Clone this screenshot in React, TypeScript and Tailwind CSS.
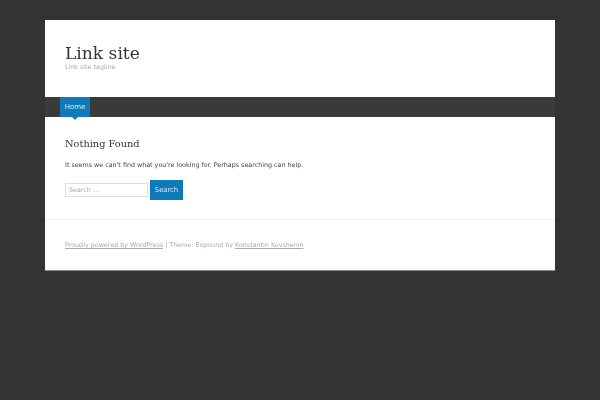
export default function App() {
  return (
    <div className="min-h-screen bg-[#333333] pt-5 font-['DejaVu_Sans',sans-serif] text-[6.36px] leading-3 text-[#444444]">
      <div className="mx-auto w-[510px] bg-white blur-[0.3px]">
        {/* site header */}
        <header className="h-[77px] px-5 pt-[22px]">
          <h1 className="font-['DejaVu_Serif',serif] text-[17.1px] leading-[22px] text-[#333333]">Link site</h1>
          <p className="-mt-[3px] text-[#aaaaaa]">Link site tagline</p>
        </header>

        <nav className="flex h-5 bg-[#3a3a3a] pl-[15px]">
          <a className="relative flex h-5 w-[30px] items-center justify-center bg-[#0f7ab8] text-[7px] text-[#dbeaf4]">
            Home
            <span className="absolute top-5 left-3 h-0 w-0 border-x-[3px] border-t-[3px] border-x-transparent border-t-[#0f7ab8]"></span>
          </a>
        </nav>

        <main className="h-[103px] border-b border-[#eeeeee] px-5 pt-5">
          <h2 className="font-['DejaVu_Serif',serif] text-[9.8px] leading-[14px] text-[#333333]">Nothing Found</h2>
          <p className="mt-2">It seems we can't find what you're looking for. Perhaps searching can help.</p>
          <form className="mt-[9px] flex items-center gap-[2px]">
            <input
              placeholder="Search …"
              className="h-[14px] w-[83px] border border-[#dddddd] px-[3px] pb-[2px] text-[6.36px] placeholder:text-[#aaaaaa]"
            />
            <button className="h-5 w-[33px] bg-[#0f7ab8] text-[6.8px] text-[#dbeaf4]">Search</button>
          </form>
        </main>

        <footer className="flex h-[51px] items-start border-b border-[#888888] px-5 pt-[19px] text-[#aaaaaa]">
          <p>
            <a className="underline">Proudly powered by WordPress</a> | Theme: Expound by{' '}
            <a className="underline">Konstantin Kovshenin</a>
          </p>
        </footer>
      </div>
    </div>
  );
}
